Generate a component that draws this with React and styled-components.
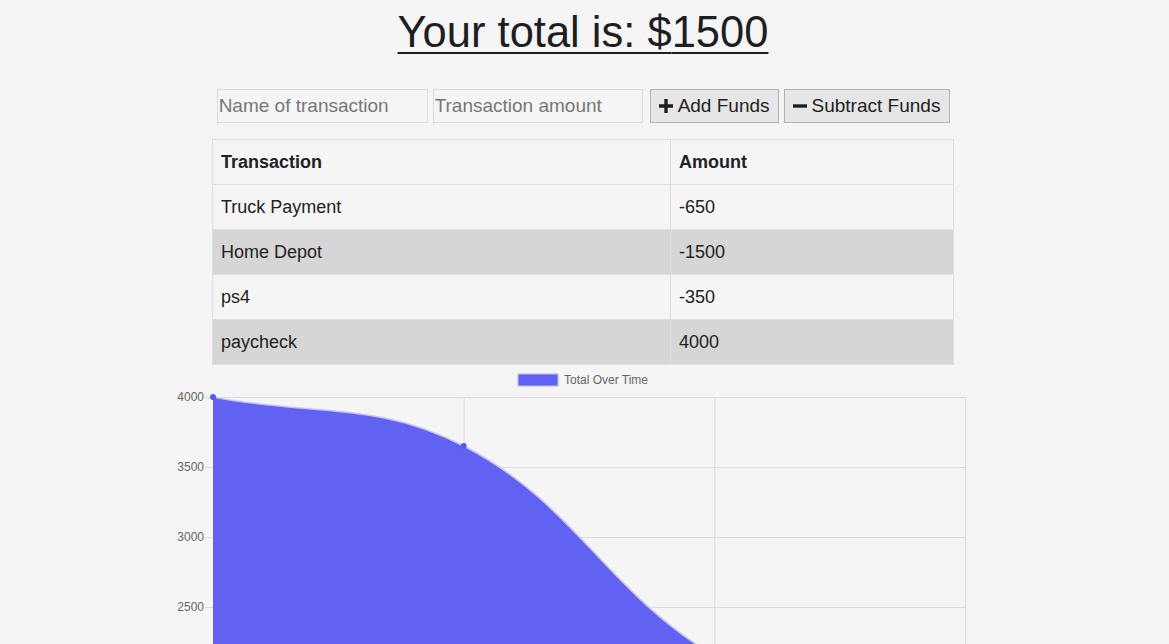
import React from 'react';
import styled, { createGlobalStyle } from 'styled-components';

const GlobalStyle = createGlobalStyle`
  body {
    margin: 0;
    background: #f5f5f5;
    font-family: "Liberation Sans", Arial, sans-serif;
    color: #222;
  }
`;

const transactions = [
  { name: "Truck Payment", value: -650 },
  { name: "Home Depot", value: -1500 },
  { name: "ps4", value: -350 },
  { name: "paycheck", value: 4000 },
];

export default function App() {
  const total = transactions.reduce((sum, t) => sum + t.value, 0);

  return <Page>
    <GlobalStyle />
    <Total>Your total is: ${total}</Total>
    <Form>
      <Input placeholder="Name of transaction" width={211} />
      <Input placeholder="Transaction amount" width={210} />
      <Button><PlusIcon />Add Funds</Button>
      <Button><MinusIcon />Subtract Funds</Button>
    </Form>
    <Table>
      <thead>
        <tr>
          <Th>Transaction</Th>
          <Th>Amount</Th>
        </tr>
      </thead>
      <tbody>
        {transactions.map((t) => <Row key={t.name}>
          <Td>{t.name}</Td>
          <Td>{t.value}</Td>
        </Row>)}
      </tbody>
    </Table>
    <Chart transactions={transactions} />
  </Page>
}

const Page = styled.div`
  display: flex;
  flex-direction: column;
  align-items: center;
  height: 644px;
  overflow: hidden;
`

const Total = styled.h1`
  margin: 6px 3px 0 0;
  font-size: 43.5px;
  font-weight: normal;
  line-height: 52px;
  text-decoration: underline;
  text-decoration-thickness: 2px;
  text-underline-offset: 5px;
  color: #1e1e22;
`

const Form = styled.div`
  display: flex;
  gap: 5px;
  margin: 31px 2px 0 0;

  & > input + button {
    margin-left: 2px;
  }
`

const Input = styled.input`
  box-sizing: border-box;
  width: ${(p) => p.width}px;
  height: 34px;
  padding: 0 1px;
  border: 1px solid #dcdcdc;
  background: #f5f5f5;
  font-family: "Liberation Sans", Arial, sans-serif;
  font-size: 19px;
  color: #222;
  outline: none;

  &::placeholder {
    color: #777;
  }
`

const Button = styled.button`
  box-sizing: border-box;
  height: 34px;
  display: flex;
  align-items: center;
  gap: 4px;
  padding: 0 8px 0 7px;
  border: 1px solid #b4b4b4;
  background: #e6e6e6;
  font-family: "Liberation Sans", Arial, sans-serif;
  font-size: 19px;
  color: #222;

  &:last-child {
    padding-right: 9px;
  }
`

const IconSVG = styled.svg`
  width: 16px;
  height: 16px;
  stroke: #1e1e1e;
  stroke-width: 3.4;
  fill: none;
`

const PlusIcon = () => <IconSVG viewBox="0 0 16 16"><path d="M8 1v14M1 8h14" /></IconSVG>
const MinusIcon = () => <IconSVG viewBox="0 0 16 16"><path d="M1 8h14" /></IconSVG>

const Table = styled.table`
  margin: 16px 3px 0 0;
  width: 742px;
  border-collapse: collapse;
  font-size: 18px;
`

const Th = styled.th`
  height: 44px;
  padding: 0 8px;
  text-align: left;
  font-weight: bold;
  border: 1px solid #dedede;
  &:first-child { width: 441px; }
`

const Row = styled.tr`
  &:nth-child(even) {
    background: #d6d6d6;
  }
`

const Td = styled.td`
  height: 44px;
  padding: 0 8px;
  border: 1px solid #dedede;
`

function Chart({ transactions }) {
  // running totals, oldest first
  const values = [];
  let run = 0;
  [...transactions].reverse().forEach((t) => {
    run += t.value;
    values.push(run);
  });

  const left = 213, right = 965, top = 31;
  const step = (right - left) / (values.length - 1);
  const yOf = (v) => top + (4000 - v) * 70 / 500;
  const pts = values.map((v, i) => ({ x: left + i * step, y: yOf(v) }));

  // chart.js style spline with tension 0.4
  const cps = pts.map((p, i) => {
    const prev = pts[i - 1] || p;
    const next = pts[i + 1] || p;
    const d01 = Math.hypot(p.x - prev.x, p.y - prev.y);
    const d12 = Math.hypot(next.x - p.x, next.y - p.y);
    const s01 = d01 / (d01 + d12 || 1);
    const s12 = d12 / (d01 + d12 || 1);
    return {
      prev: { x: p.x - 0.4 * s01 * (next.x - prev.x), y: p.y - 0.4 * s01 * (next.y - prev.y) },
      next: { x: p.x + 0.4 * s12 * (next.x - prev.x), y: p.y + 0.4 * s12 * (next.y - prev.y) },
    };
  });

  let line = `M${pts[0].x} ${pts[0].y}`;
  for (let i = 1; i < pts.length; i++) {
    const a = cps[i - 1].next, b = cps[i].prev;
    line += ` C${a.x} ${a.y} ${b.x} ${b.y} ${pts[i].x} ${pts[i].y}`;
  }
  const bottom = 500;
  const area = `${line} L${right} ${bottom} L${left} ${bottom} Z`;

  const ticks = [4000, 3500, 3000, 2500];
  const grid = "#dcdcdc";

  return <ChartSVG viewBox="0 0 1169 278">
    <rect x="518" y="8" width="40" height="12" fill="#6262f3" stroke="#b8b8f4" strokeWidth="1" />
    <ChartText x="564" y="18">Total Over Time</ChartText>
    {ticks.map((t) => <g key={t}>
      <line x1="205" x2={right} y1={yOf(t) + 0.5} y2={yOf(t) + 0.5} stroke={grid} />
      <ChartText x="204" y={yOf(t) + 4} textAnchor="end">{t}</ChartText>
    </g>)}
    {pts.map((p, i) => <line key={i} x1={p.x + 0.5} x2={p.x + 0.5} y1={top} y2={bottom} stroke={grid} />)}
    <path d={area} fill="#6161f2" />
    <path d={line} fill="none" stroke="#c4c4f6" strokeWidth="1.5" />
    {pts.map((p, i) => <circle key={i} cx={p.x} cy={p.y} r="3" fill="#5a5ae8" />)}
  </ChartSVG>
}

const ChartSVG = styled.svg`
  display: block;
  flex-shrink: 0;
  width: 1169px;
  height: 278px;
  margin-top: 1px;
`

const ChartText = styled.text`
  font-family: "Liberation Sans", Arial, sans-serif;
  font-size: 12px;
  fill: #666;
`
